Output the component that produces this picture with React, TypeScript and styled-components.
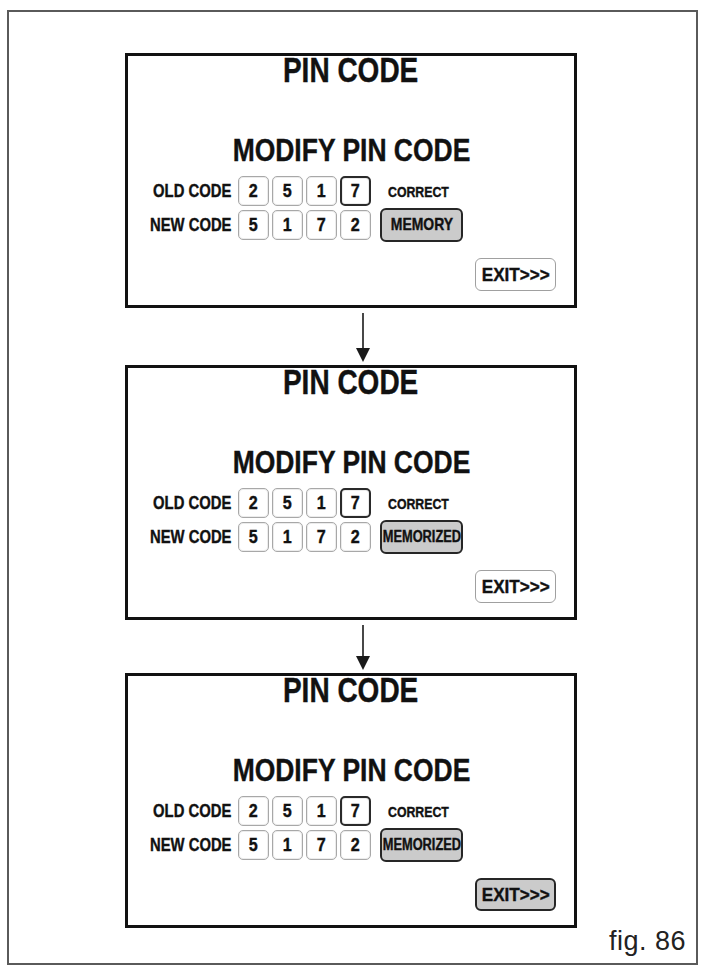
import styled, { createGlobalStyle } from "styled-components";

const GlobalStyle = createGlobalStyle`
    html, body {
        margin: 0;
        padding: 0;
        background: #ffffff;
    }
    body {
        font-family: "Liberation Sans", Arial, sans-serif;
        color: #111111;
    }
`;

// One screen per step of the sequence
type Step = {
    memoryLabel: string;
    exitPressed: boolean;
};

const steps: Step[] = [
    { memoryLabel: "MEMORY", exitPressed: false },
    { memoryLabel: "MEMORIZED", exitPressed: false },
    { memoryLabel: "MEMORIZED", exitPressed: true },
];

const oldCode = ["2", "5", "1", "7"];
const newCode = ["5", "1", "7", "2"];

// No narrow face installed, so squeeze the bold face horizontally
const Narrow = styled.span<{ $origin?: string; $scale?: number }>`
    display: inline-block;
    flex-shrink: 0;
    white-space: nowrap;
    transform: scaleX(${({ $scale }) => $scale ?? 0.82});
    transform-origin: ${({ $origin }) => $origin ?? "center"};
`;

const Frame = styled.div`
    box-sizing: border-box;
    margin: 10px 0 0 7px;
    width: 691px;
    height: 955px;
    border: 2px solid #5a5a5a;
    padding: 41px 0 0 116px;
    display: flex;
    flex-direction: column;
`;

const Panel = styled.div`
    box-sizing: border-box;
    width: 452px;
    height: 255px;
    border: 3px solid #111111;
    display: flex;
    flex-direction: column;
    align-items: center;
    font-family: "Liberation Sans", Arial, sans-serif;
    font-weight: bold;
    -webkit-text-stroke: 0.4px #111111;
`;

const Title = styled.div`
    font-size: 35px;
    line-height: 34px;
    margin-top: -3px;
`;

const Subtitle = styled.div`
    font-size: 31.5px;
    line-height: 32px;
    margin-top: 47px;
`;

const CodeGrid = styled.div`
    align-self: flex-start;
    margin: 10px 0 0 7px;
    display: grid;
    grid-template-columns: 100px repeat(4, 31px) 83px;
    grid-auto-rows: 30px;
    column-gap: 3px;
    row-gap: 4px;
    align-items: center;
`;

const Label = styled.div`
    display: flex;
    justify-content: flex-end;
    margin-right: 4px;
    font-size: 19px;
    white-space: nowrap;
`;

const Digit = styled.div<{ $selected?: boolean }>`
    box-sizing: border-box;
    height: 30px;
    border-radius: 5px;
    border: ${({ $selected }) => ($selected ? "2px solid #2a2a2a" : "1.5px solid #a8a8a8")};
    box-shadow: inset 0 0 0 1px #ececec;
    background: #ffffff;
    display: flex;
    align-items: center;
    justify-content: center;
    font-size: 19px;
`;

const Status = styled.div`
    font-size: 15px;
    margin-left: 14px;
    white-space: nowrap;
`;

const MemoryButton = styled.div<{ $size: number }>`
    box-sizing: border-box;
    margin-left: 6px;
    width: 83px;
    height: 34px;
    border: 2.5px solid #262626;
    border-radius: 6px;
    background: #cbcbcb;
    display: flex;
    align-items: center;
    justify-content: center;
    font-size: ${({ $size }) => $size}px;
    white-space: nowrap;
`;

const ExitRow = styled.div`
    align-self: stretch;
    display: flex;
    justify-content: flex-end;
    margin: 18px 18px 0 0;
`;

const ExitButton = styled.div<{ $pressed: boolean }>`
    box-sizing: border-box;
    width: 81px;
    height: 33px;
    border-radius: 6px;
    border: ${({ $pressed }) => ($pressed ? "2.5px solid #262626" : "1.5px solid #a0a0a0")};
    background: ${({ $pressed }) => ($pressed ? "#cbcbcb" : "#ffffff")};
    display: flex;
    align-items: center;
    justify-content: center;
    font-size: 19px;
`;

const ArrowGap = styled.div<{ $height: number }>`
    width: 452px;
    height: ${({ $height }) => $height}px;
    display: flex;
    justify-content: center;
    padding-left: 24px;
    box-sizing: border-box;
`;

const Footer = styled.div`
    display: flex;
    justify-content: flex-end;
    padding-right: 10px;
    margin-left: -116px;
`;

const FigLabel = styled.div`
    font-family: "Liberation Sans", Arial, sans-serif;
    font-size: 27px;
    line-height: 27px;
    letter-spacing: 0.5px;
    color: #222222;
`;

function DownArrow({ height }: { height: number }) {
    return (
        <svg width="16" height={height} viewBox={`0 0 16 ${height}`}>
            <line x1="8" y1="5" x2="8" y2={height - 14} stroke="#1a1a1a" strokeWidth="1.6" />
            <polygon points={`1,${height - 17} 15,${height - 17} 8,${height - 3}`} fill="#1a1a1a" />
        </svg>
    );
}

function PinScreen({ step }: { step: Step }) {
    const short = step.memoryLabel.length < 8;

    return (
        <Panel>
            <Title>
                <Narrow $scale={0.8}>PIN CODE</Narrow>
            </Title>
            <Subtitle>
                <Narrow $scale={0.84}>MODIFY PIN CODE</Narrow>
            </Subtitle>
            <CodeGrid>
                <Label>
                    <Narrow $origin="right" $scale={0.78}>OLD CODE</Narrow>
                </Label>
                {oldCode.map((d, i) => (
                    <Digit key={`o${i}`} $selected={i === 3}>
                        <Narrow $scale={0.85}>{d}</Narrow>
                    </Digit>
                ))}
                <Status>
                    <Narrow $origin="left">CORRECT</Narrow>
                </Status>
                <Label>
                    <Narrow $origin="right" $scale={0.78}>NEW CODE</Narrow>
                </Label>
                {newCode.map((d, i) => (
                    <Digit key={`n${i}`}>
                        <Narrow $scale={0.85}>{d}</Narrow>
                    </Digit>
                ))}
                <MemoryButton $size={short ? 17 : 16}>
                    <Narrow $scale={short ? 0.82 : 0.8}>{step.memoryLabel}</Narrow>
                </MemoryButton>
            </CodeGrid>
            <ExitRow>
                <ExitButton $pressed={step.exitPressed}>
                    <Narrow $scale={0.9}>EXIT&gt;&gt;&gt;</Narrow>
                </ExitButton>
            </ExitRow>
        </Panel>
    );
}

export default function App() {
    const gaps = [57, 53];

    return (
        <>
            <GlobalStyle />
            <Frame>
                {steps.map((s, i) => (
                    <div key={i}>
                        <PinScreen step={s} />
                        {i < gaps.length && (
                            <ArrowGap $height={gaps[i]}>
                                <DownArrow height={gaps[i]} />
                            </ArrowGap>
                        )}
                    </div>
                ))}
                <Footer>
                    <FigLabel>fig. 86</FigLabel>
                </Footer>
            </Frame>
        </>
    );
}
